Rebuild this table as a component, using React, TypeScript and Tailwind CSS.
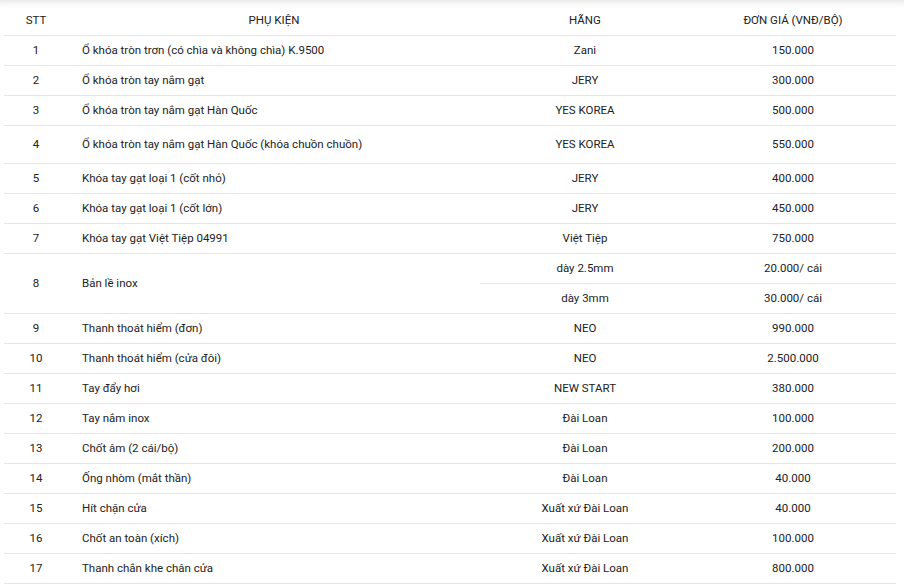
import React from 'react';

type Row = { stt: number; name: string; brand: string; price: string; h?: string };

const rows: Row[] = [
  { stt: 1, name: 'Ổ khóa tròn trơn (có chìa và không chìa) K.9500', brand: 'Zani', price: '150.000' },
  { stt: 2, name: 'Ổ khóa tròn tay nắm gạt', brand: 'JERY', price: '300.000' },
  { stt: 3, name: 'Ổ khóa tròn tay nắm gạt Hàn Quốc', brand: 'YES KOREA', price: '500.000' },
  { stt: 4, name: 'Ổ khóa tròn tay nắm gạt Hàn Quốc (khóa chuồn chuồn)', brand: 'YES KOREA', price: '550.000', h: 'h-[38px]' },
  { stt: 5, name: 'Khóa tay gạt loại 1 (cốt nhỏ)', brand: 'JERY', price: '400.000' },
  { stt: 6, name: 'Khóa tay gạt loại 1 (cốt lớn)', brand: 'JERY', price: '450.000' },
  { stt: 7, name: 'Khóa tay gạt Việt Tiệp 04991', brand: 'Việt Tiệp', price: '750.000' },
];

const rows2: Row[] = [
  { stt: 9, name: 'Thanh thoát hiểm (đơn)', brand: 'NEO', price: '990.000' },
  { stt: 10, name: 'Thanh thoát hiểm (cửa đôi)', brand: 'NEO', price: '2.500.000' },
  { stt: 11, name: 'Tay đẩy hơi', brand: 'NEW START', price: '380.000' },
  { stt: 12, name: 'Tay nắm inox', brand: 'Đài Loan', price: '100.000' },
  { stt: 13, name: 'Chốt âm (2 cái/bộ)', brand: 'Đài Loan', price: '200.000' },
  { stt: 14, name: 'Ống nhòm (mắt thần)', brand: 'Đài Loan', price: '40.000' },
  { stt: 15, name: 'Hít chặn cửa', brand: 'Xuất xứ Đài Loan', price: '40.000' },
  { stt: 16, name: 'Chốt an toàn (xích)', brand: 'Xuất xứ Đài Loan', price: '100.000' },
  { stt: 17, name: 'Thanh chắn khe chân cửa', brand: 'Xuất xứ Đài Loan', price: '800.000' },
];

const td = 'border-b border-[#e6e6e6] p-0 pt-[2px] align-middle';

function PriceRow({ r }: { r: Row }) {
  return (
    <tr className={r.h ?? 'h-[30px]'}>
      <td className={`${td} text-center`}>{r.stt}</td>
      <td className={`${td} pl-[14px] text-left`}>{r.name}</td>
      <td className={`${td} text-center`}>{r.brand}</td>
      <td className={`${td} text-center`}>{r.price}</td>
    </tr>
  );
}

export default function App() {
  return (
    <div className="w-[904px] h-[585px] bg-white overflow-hidden shadow-[inset_0_9px_8px_-8px_rgba(0,0,0,0.13)]">
      <div className="pl-[4px] pr-[8px]">
        <table
          className="w-full table-fixed border-collapse text-[11.5px] leading-none text-[#222]"
          style={{ fontFamily: 'Roboto, "Liberation Sans", sans-serif' }}
        >
          <colgroup>
            <col className="w-[64px]" />
            <col className="w-[412px]" />
            <col className="w-[210px]" />
            <col />
          </colgroup>
          <thead>
            <tr className="h-[35px]">
              <th className={`${td} font-normal text-center pt-[7px]`}>STT</th>
              <th className={`${td} font-normal text-center pt-[7px]`}>PHỤ KIỆN</th>
              <th className={`${td} font-normal text-center pt-[7px]`}>HÃNG</th>
              <th className={`${td} font-normal text-center pt-[7px]`}>ĐƠN GIÁ (VNĐ/BỘ)</th>
            </tr>
          </thead>
          <tbody>
            {rows.map((r) => (
              <PriceRow key={r.stt} r={r} />
            ))}
            <tr className="h-[30px]">
              <td rowSpan={2} className={`${td} text-center`}>8</td>
              <td rowSpan={2} className={`${td} pl-[14px] text-left`}>Bản lề inox</td>
              <td className={`${td} text-center`}>dày 2.5mm</td>
              <td className={`${td} text-center`}>20.000/ cái</td>
            </tr>
            <tr className="h-[30px]">
              <td className={`${td} text-center`}>dày 3mm</td>
              <td className={`${td} text-center`}>30.000/ cái</td>
            </tr>
            {rows2.map((r) => (
              <PriceRow key={r.stt} r={r} />
            ))}
          </tbody>
        </table>
      </div>
    </div>
  );
}
